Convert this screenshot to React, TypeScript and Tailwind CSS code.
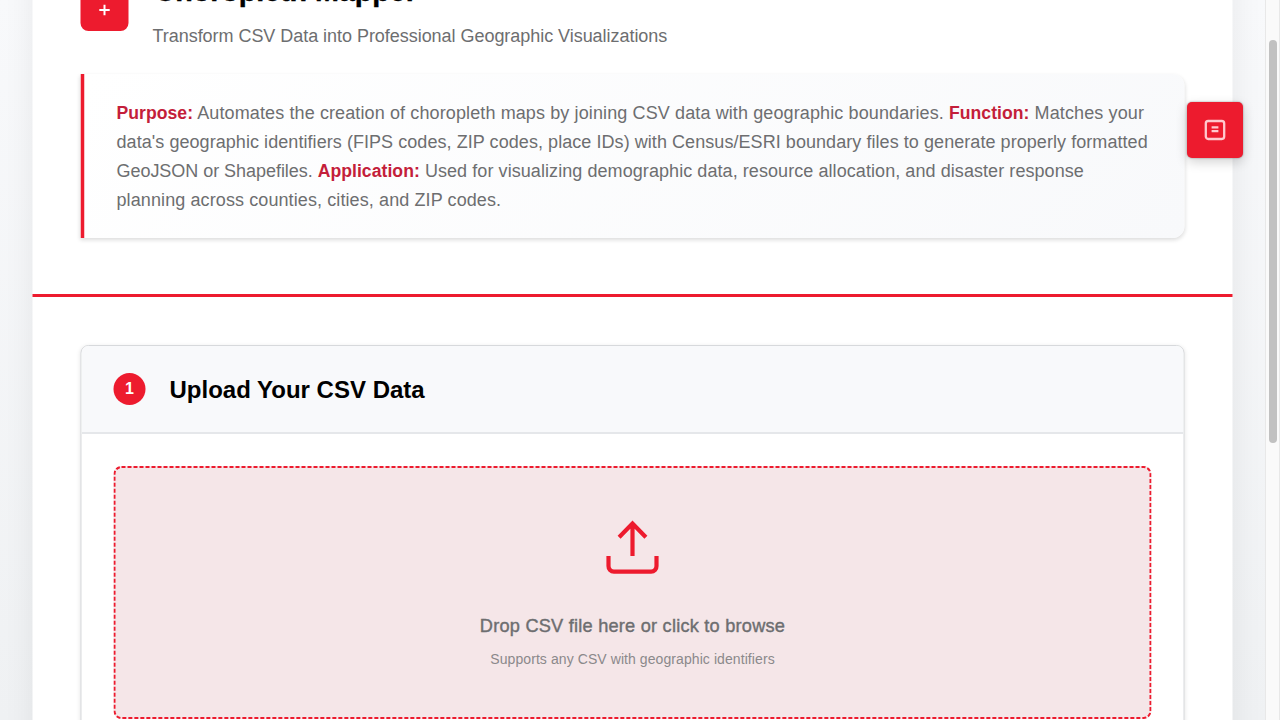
import type { ReactNode } from "react";

function Term({ children }: { children: ReactNode }) {
  return <strong className="text-[17.6px] font-bold tracking-[0.04px] text-[#c41e3a]">{children}</strong>;
}

function UploadIcon() {
  return (
    <svg className="block h-16 w-16" viewBox="0 0 64 64" fill="none" stroke="#ed1b2e" strokeWidth="4.2">
      <path d="M32 40V8M18.6 21.2 32 7.6l13.4 13.6" />
      <path d="M8 40v10a5.4 5.4 0 0 0 5.4 5.6h37.2A5.4 5.4 0 0 0 56 50V40" />
    </svg>
  );
}

function Header() {
  return (
    <header className="-mt-[66px] h-[363px] border-b-[3px] border-[#ed1b2e] px-12 pt-[49px]">
      <div className="flex h-[91px] gap-6">
        <div className="flex h-12 w-12 items-center justify-center rounded-lg bg-[#ed1b2e]">
          <svg className="mt-[5px] h-3 w-3" viewBox="0 0 12 12" fill="none" stroke="white" strokeWidth="2">
            <path d="M6 .8v10.4M.8 6h10.4" />
          </svg>
        </div>
        <div className="whitespace-nowrap">
          <h1 className="-mt-[8px] h-[48px] pl-0.5 text-[28.8px] leading-8 font-bold tracking-[-0.1px] text-black [-webkit-text-stroke:0.4px_black]">Choropleth Mapper</h1>
          <p className="text-[18px] leading-[26px] tracking-[-0.04px] text-[#6d6e70]">Transform CSV Data into Professional Geographic Visualizations</p>
        </div>
      </div>
      <div className="h-[164px] rounded-r-xl border-l-4 border-[#ed1b2e] bg-linear-135 from-white to-[#f8f9fb] px-8 pt-[25px] text-[18px] leading-[29px] whitespace-nowrap text-[#6d6e70] shadow-[0_2px_4px_rgba(0,0,0,0.14)]">
        <p className="tracking-[0.115px]"><Term>Purpose:</Term> Automates the creation of choropleth maps by joining CSV data with geographic boundaries. <Term>Function:</Term> Matches your</p>
        <p className="tracking-[0.06px]">data's geographic identifiers (FIPS codes, ZIP codes, place IDs) with Census/ESRI boundary files to generate properly formatted</p>
        <p className="tracking-[0.07px]"><span className="tracking-[-0.04px]">GeoJSON or Shapefiles. </span><Term>Application:</Term> Used for visualizing demographic data, resource allocation, and disaster response</p>
        <p className="tracking-[0.1px]">planning across counties, cities, and ZIP codes.</p>
      </div>
    </header>
  );
}

function UploadCard() {
  return (
    <section className="h-[600px] overflow-hidden rounded-lg border border-[#d7d9dc] bg-white shadow-[0_1px_4px_rgba(0,0,0,0.1)]">
      <div className="flex h-[88px] items-center gap-6 border-b-2 border-[#e5e7ea] bg-[#f8f9fb] px-8">
        <span className="flex h-8 w-8 items-center justify-center rounded-full bg-[#ed1b2e] text-base font-bold text-white">1</span>
        <h2 className="pt-0.5 text-2xl font-bold whitespace-nowrap text-black">Upload Your CSV Data</h2>
      </div>
      <div className="p-8">
        <button className="relative flex h-[253px] w-full flex-col items-center rounded-lg bg-[#f5e6e8] pt-[50px] whitespace-nowrap">
          <svg className="absolute inset-0 h-full w-full" viewBox="0 0 1038 253" fill="none" stroke="#ed1b2e" strokeWidth="2" strokeDasharray="4 2">
            <rect x="1" y="1" width="1036" height="251" rx="7" />
          </svg>
          <UploadIcon />
          <span className="mt-8 text-[18.2px] leading-7 tracking-[0.22px] text-[#6d6e70] [-webkit-text-stroke:0.4px_#6d6e70]">Drop CSV file here or click to browse</span>
          <span className="mt-[7px] text-sm leading-6 tracking-[0.08px] text-[#8b898b]">Supports any CSV with geographic identifiers</span>
        </button>
      </div>
    </section>
  );
}

export default function App() {
  return (
    <div className="relative flex h-screen overflow-hidden bg-white font-['Liberation_Sans',Arial,sans-serif]">
      <div className="w-[1265px] bg-linear-to-b from-[#f8f9fb] to-[#eff1f3]">
        <main className="ml-8 h-[900px] w-[1200px] [transform:translateX(0.5px)] bg-white shadow-[0_0_30px_rgba(0,0,0,0.07)]">
          <Header />
          <div className="px-12 pt-12">
            <UploadCard />
          </div>
        </main>
      </div>
      <div className="h-full w-[15px] border-x border-[#e8e8e8] bg-[#fafafa] pt-10 pl-[3px]">
        <div className="h-[403px] w-2 rounded-full bg-[#c1c1c1]" />
      </div>
      <button aria-label="Open notes" className="absolute top-[102px] left-[1187px] flex h-14 w-14 items-center justify-center rounded-[5px] bg-[#ed1b2e] shadow-[0_4px_12px_rgba(0,0,0,0.18),0_0_2px_rgba(0,0,0,0.4)]">
        <svg className="h-6 w-6" viewBox="0 0 24 24" fill="none" stroke="#ffc9ce" strokeWidth="2.3">
          <rect x="2.8" y="3" width="18.4" height="18" rx="2.4" />
          <path d="M8.6 9.3h6.8M8.6 13.2h6.8" />
        </svg>
      </button>
    </div>
  );
}
